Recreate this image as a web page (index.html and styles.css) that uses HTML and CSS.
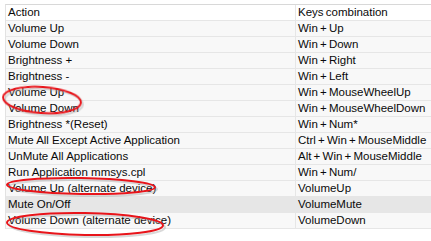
FILE: index.html
```html
<!DOCTYPE html>
<html lang="en">
<head>
    <meta charset="UTF-8">
    <title>Hotkeys</title>
    <link rel="stylesheet" href="styles.css">
</head>
<body>
    <div class="list">
        <div class="row head"><div class="cell">Action</div><div class="cell keys">Keys combination</div></div>
        <div class="row"><div class="cell">Volume Up</div><div class="cell keys">Win + Up</div></div>
        <div class="row"><div class="cell">Volume Down</div><div class="cell keys">Win + Down</div></div>
        <div class="row"><div class="cell">Brightness +</div><div class="cell keys">Win + Right</div></div>
        <div class="row"><div class="cell">Brightness -</div><div class="cell keys">Win + Left</div></div>
        <div class="row"><div class="cell">Volume Up</div><div class="cell keys">Win + MouseWheelUp</div></div>
        <div class="row"><div class="cell">Volume Down</div><div class="cell keys">Win + MouseWheelDown</div></div>
        <div class="row"><div class="cell">Brightness *(Reset)</div><div class="cell keys">Win + Num*</div></div>
        <div class="row"><div class="cell">Mute All Except Active Application</div><div class="cell keys">Ctrl + Win + MouseMiddle</div></div>
        <div class="row"><div class="cell">UnMute All Applications</div><div class="cell keys">Alt + Win + MouseMiddle</div></div>
        <div class="row"><div class="cell">Run Application mmsys.cpl</div><div class="cell keys">Win + Num/</div></div>
        <div class="row"><div class="cell">Volume Up (alternate device)</div><div class="cell keys">VolumeUp</div></div>
        <div class="row selected"><div class="cell">Mute On/Off</div><div class="cell keys">VolumeMute</div></div>
        <div class="row"><div class="cell">Volume Down (alternate device)</div><div class="cell keys">VolumeDown</div></div>
    </div>
    <svg class="marks" width="431" height="241" viewBox="0 0 431 241">
        <g fill="none" stroke="#aaa" stroke-width="2" opacity="0.45">
            <ellipse cx="44" cy="102" rx="39" ry="13" transform="rotate(4 44 102)"/>
            <ellipse cx="83" cy="188" rx="74" ry="8" transform="rotate(1 83 188)"/>
            <ellipse cx="87" cy="226" rx="78" ry="11" transform="rotate(1 87 226)"/>
        </g>
        <g fill="none" stroke="#e8141a" stroke-width="2">
            <ellipse cx="42" cy="100" rx="39" ry="13" transform="rotate(4 42 100)"/>
            <ellipse cx="81" cy="186" rx="74" ry="8" transform="rotate(1 81 186)"/>
            <ellipse cx="85" cy="224" rx="78" ry="11" transform="rotate(1 85 224)"/>
        </g>
    </svg>
</body>
</html>
```

FILE: styles.css
```css
body {
    margin: 0;
    background-color: #ffffff;
    font-family: "Liberation Sans", Arial, sans-serif;
    font-size: 11.5px;
    color: #0a0a0a;
    position: relative;
    width: 431px;
    height: 241px;
    overflow: hidden;
}
.list {
    margin: 4px 0 0 5px;
    border-top: 1px solid #d8d8d8;
    border-left: 1px solid #e2e2e2;
}
.row {
    display: flex;
    height: 15px;
    border-bottom: 1px solid #e6e6e6;
    background-color: #f8f8f8;
}
.row.head {
    background-color: #ffffff;
}
.row.selected {
    background-color: #e6e6e6;
}
.cell {
    width: 287px;
    padding-left: 2px;
    line-height: 15px;
    white-space: nowrap;
    border-right: 1px solid #e6e6e6;
}
.cell.keys {
    flex: 1;
    border-right: none;
    word-spacing: -1px;
}
.marks {
    position: absolute;
    left: 0;
    top: 0;
}
```
